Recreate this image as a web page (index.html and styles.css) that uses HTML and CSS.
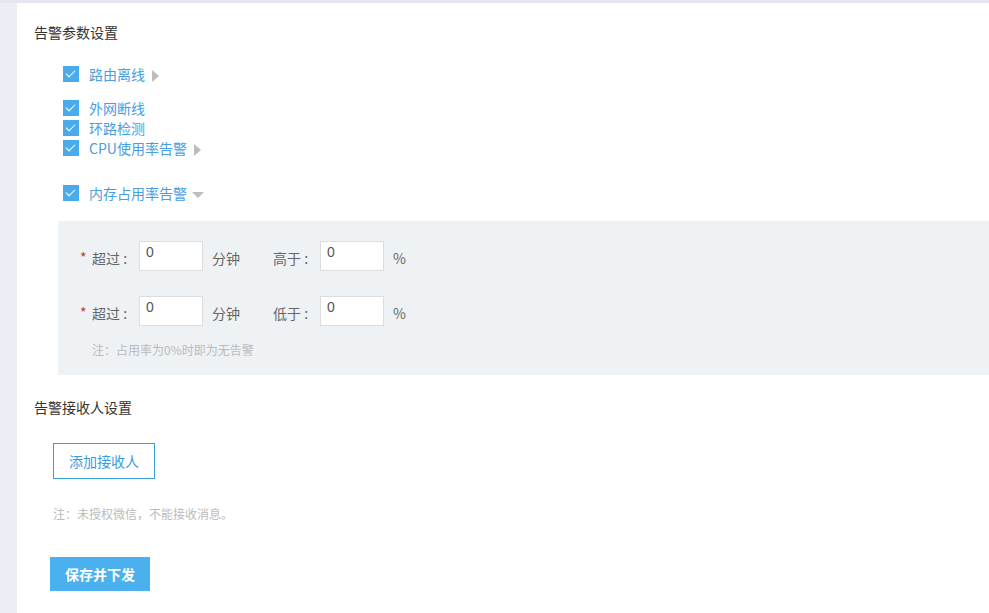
FILE: index.html
```html
<!DOCTYPE html>
<html lang="zh">
<head>
    <meta charset="UTF-8">
    <title>告警设置</title>
    <link rel="stylesheet" href="styles.css">
</head>
<body>
    <div class="panel">
        <h2 class="section-title">告警参数设置</h2>

        <div class="checks">
            <label class="check first">
                <span class="box"></span>路由离线<span class="arrow right"></span>
            </label>
            <div class="group">
                <label class="check"><span class="box"></span>外网断线</label>
                <label class="check"><span class="box"></span>环路检测</label>
                <label class="check"><span class="box"></span>CPU使用率告警<span class="arrow right"></span></label>
            </div>
            <label class="check mem">
                <span class="box"></span>内存占用率告警<span class="arrow down"></span>
            </label>
        </div>

        <div class="mem-box">
            <div class="row">
                <span class="req">*</span>
                <span class="lbl">超过 :</span>
                <input class="num" type="text" value="0">
                <span class="unit">分钟</span>
                <span class="lbl">高于 :</span>
                <input class="num" type="text" value="0">
                <span class="unit">%</span>
            </div>
            <div class="row">
                <span class="req">*</span>
                <span class="lbl">超过 :</span>
                <input class="num" type="text" value="0">
                <span class="unit">分钟</span>
                <span class="lbl">低于 :</span>
                <input class="num" type="text" value="0">
                <span class="unit">%</span>
            </div>
            <p class="tip">注：占用率为0%时即为无告警</p>
        </div>

        <h2 class="section-title second">告警接收人设置</h2>
        <button class="btn-add">添加接收人</button>
        <p class="tip tip2">注：未授权微信，不能接收消息。</p>
        <button class="btn-save">保存并下发</button>
    </div>
</body>
</html>
```

FILE: styles.css
```css
body {
    margin: 0;
    background-color: #eceef5;
    font-family: "Microsoft YaHei", "Noto Sans CJK SC", "Liberation Sans", sans-serif;
    font-size: 14px;
    color: #333;
    border-top: 3px solid #e6e6f3;
}
.panel {
    margin-left: 17px;
    background-color: white;
    height: 610px;
    padding: 0 0 0 17px;
    box-sizing: border-box;
    overflow: hidden;
}
.section-title {
    margin: 0;
    padding-top: 20px;
    font-size: 14px;
    font-weight: normal;
    line-height: 18px;
    color: #333;
}
.section-title.second {
    padding-top: 23px;
}
.checks {
    padding-left: 29px;
    padding-top: 23px;
}
.check {
    display: flex;
    align-items: center;
    height: 20px;
    color: #4a9de0;
    font-size: 14px;
}
.group {
    margin-top: 14px;
}
.check.mem {
    margin-top: 25px;
}
.box {
    width: 16px;
    height: 16px;
    background-color: #4aabeb;
    margin-right: 10px;
    position: relative;
}
.box::after {
    content: "";
    position: absolute;
    left: 5px;
    top: 2px;
    width: 4px;
    height: 8px;
    border: solid white;
    border-width: 0 1.5px 1.5px 0;
    transform: rotate(45deg);
}
.arrow {
    display: inline-block;
    margin-left: 7px;
}
.arrow.right {
    border-left: 7px solid #bdbdbd;
    border-top: 6px solid transparent;
    border-bottom: 6px solid transparent;
    margin-top: 3px;
}
.arrow.down {
    border-top: 6px solid #bdbdbd;
    border-left: 6px solid transparent;
    border-right: 6px solid transparent;
    margin-left: 5px;
    margin-top: 3px;
}
.mem-box {
    margin-top: 18px;
    margin-left: 24px;
    background-color: #eff2f5;
    height: 154px;
    padding: 20px 0 0 22px;
    box-sizing: border-box;
}
.row {
    display: flex;
    align-items: center;
    height: 30px;
    margin-bottom: 25px;
}
.req {
    color: #c0392b;
    width: 12px;
    font-size: 14px;
    margin-top: 2px;
}
.lbl {
    color: #666;
    width: 47px;
    margin-top: 4px;
}
.num {
    width: 64px;
    height: 30px;
    box-sizing: border-box;
    border: 1px solid #ddd;
    background-color: white;
    padding: 0 6px 8px;
    font-family: "Liberation Sans", sans-serif;
    font-size: 14px;
    color: #555;
    outline: none;
}
.unit {
    color: #666;
    margin-left: 9px;
    width: 61px;
    margin-top: 4px;
}
.tip {
    margin: -10px 0 0 12px;
    font-size: 12px;
    color: #bbb;
}
.btn-add {
    margin: 27px 0 0 19px;
    width: 102px;
    height: 36px;
    border: 1px solid #3ba2dc;
    background: white;
    color: #3b9be0;
    font-family: inherit;
    font-size: 14px;
    cursor: pointer;
    display: block;
}
.tip.tip2 {
    margin: 26px 0 0 19px;
}
.btn-save {
    margin: 35px 0 0 16px;
    width: 100px;
    height: 34px;
    border: none;
    background-color: #4ab1ee;
    color: white;
    font-family: inherit;
    font-size: 14px;
    font-weight: bold;
    display: block;
    cursor: pointer;
}
```
